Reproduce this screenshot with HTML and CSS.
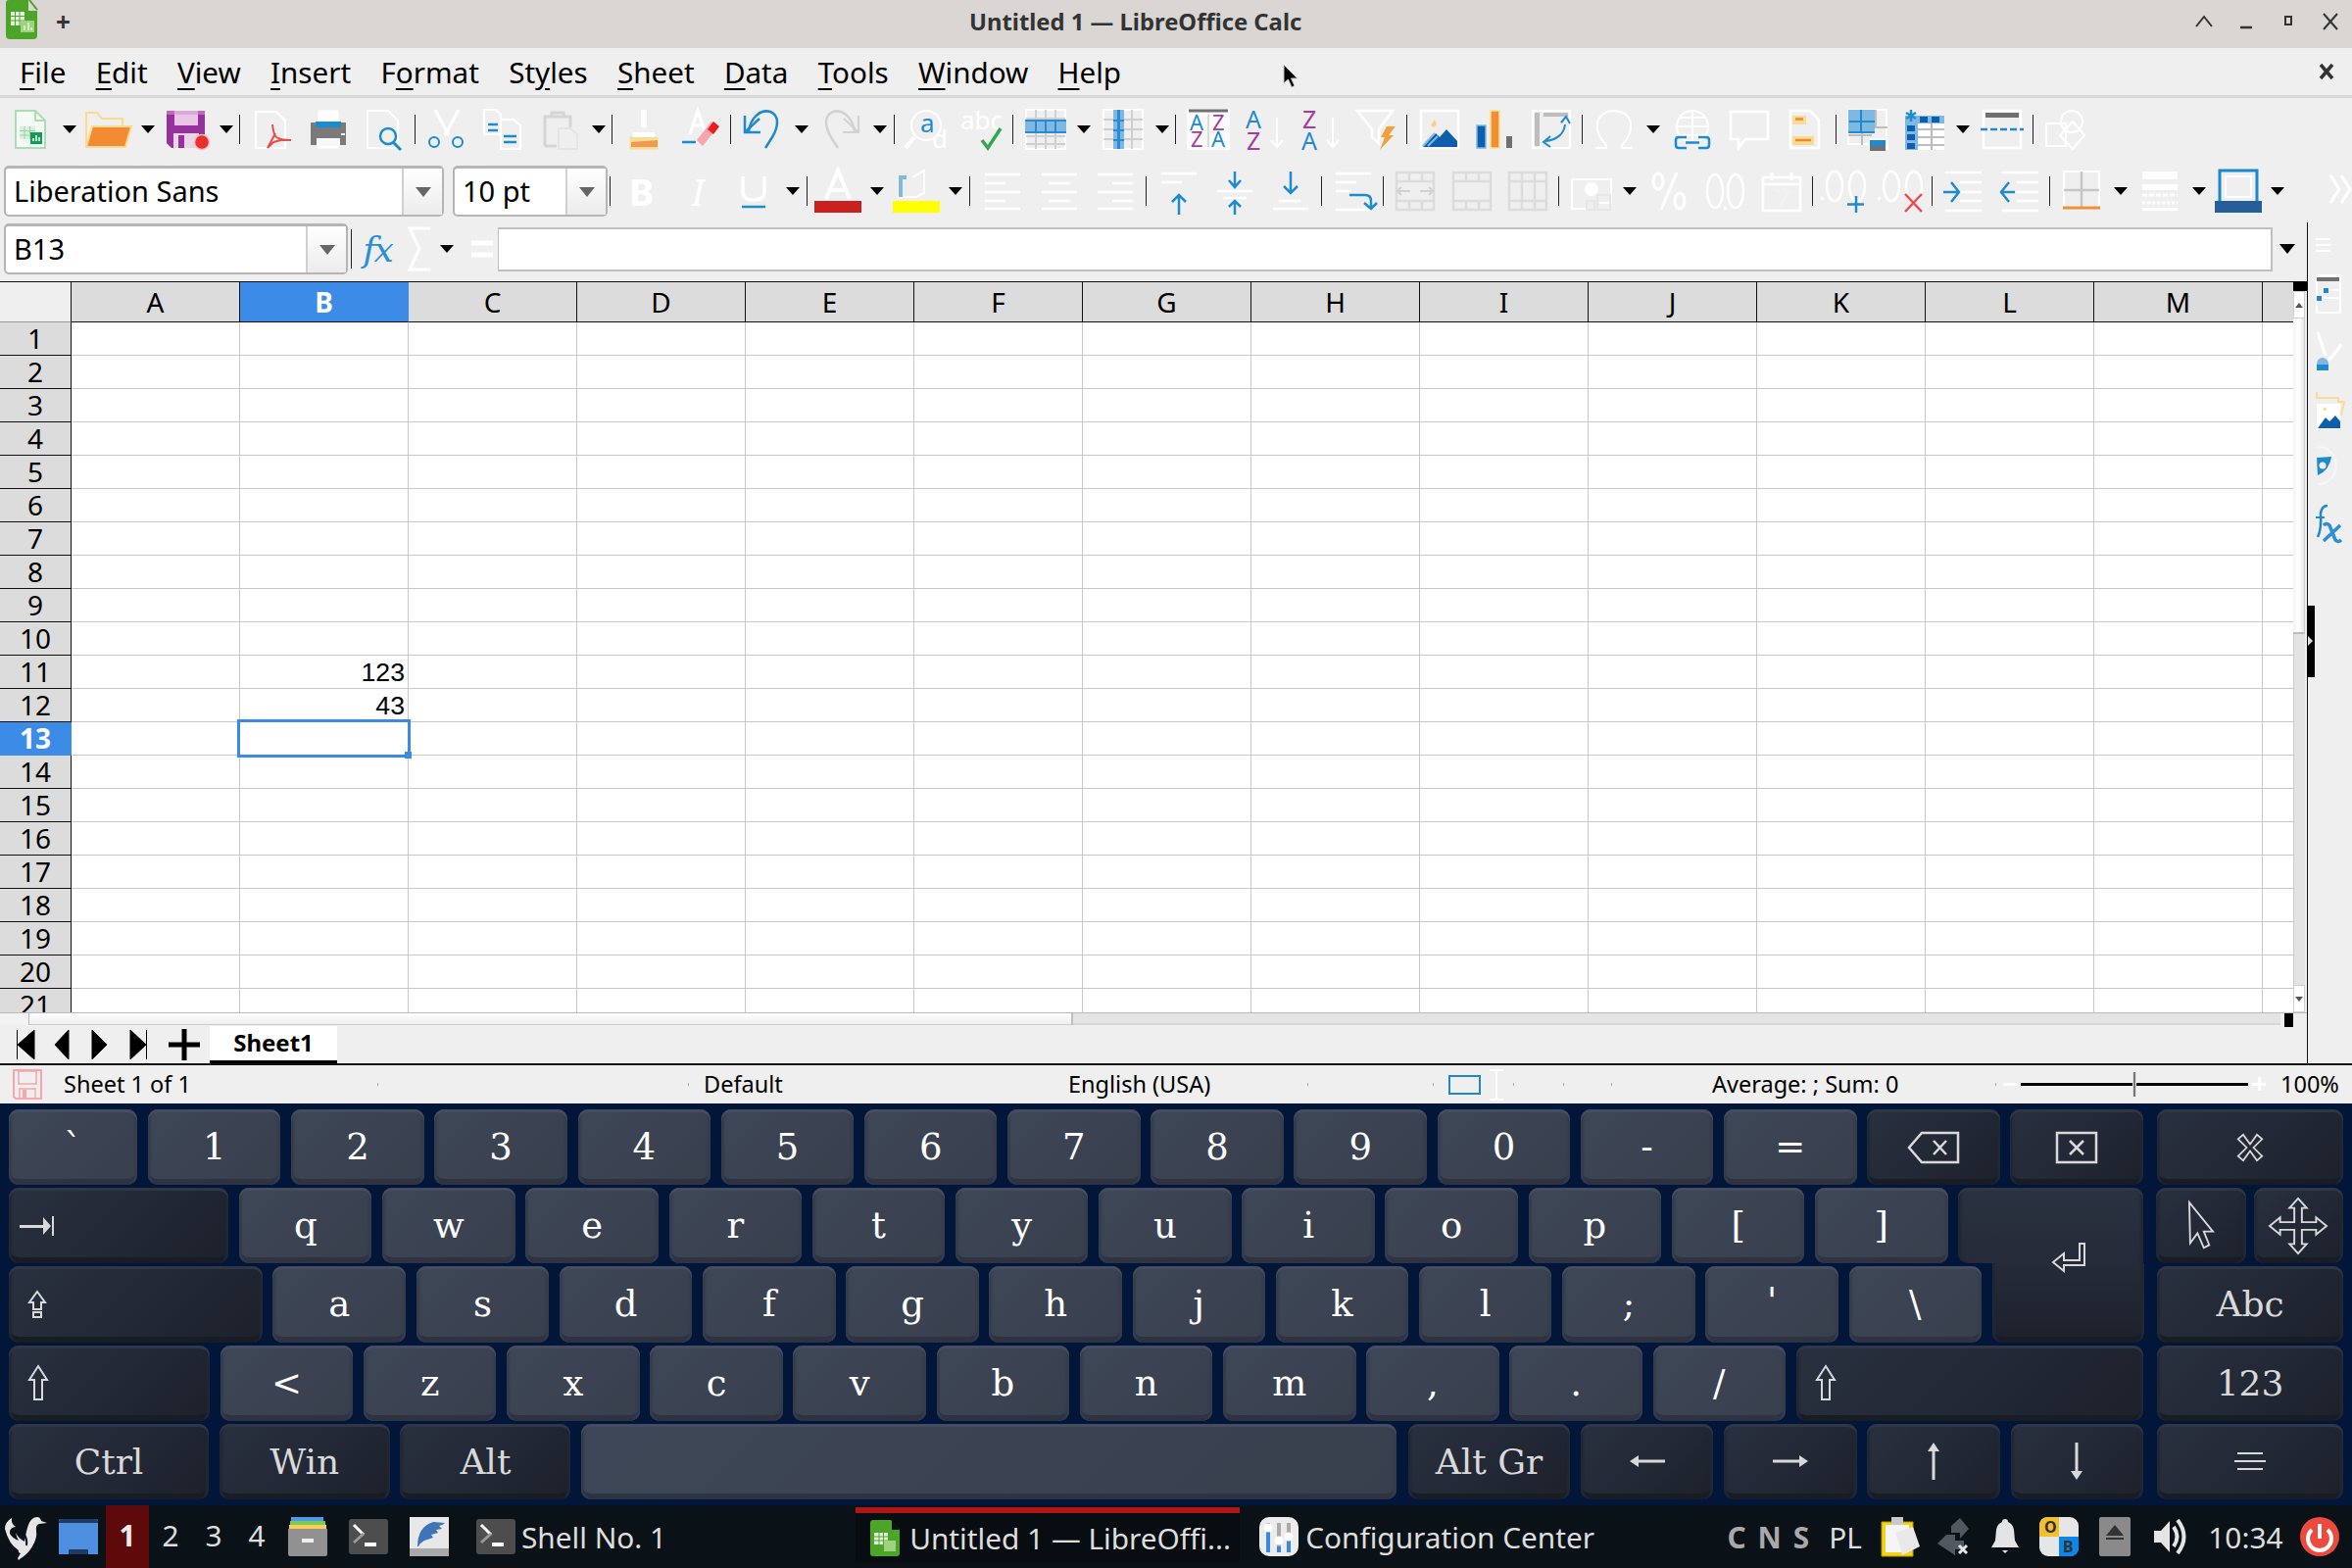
FILE: index.html
```html
<!DOCTYPE html>
<html lang="en">
<head>
    <meta charset="UTF-8">
    <title>Untitled 1 — LibreOffice Calc</title>
    <link rel="stylesheet" href="styles.css">
</head>
<body>

<header class="titlebar">
    <svg class="app-logo" viewBox="0 0 32 40"><path d="M3 0h20l9 11v25q0 4-4 4H4q-4 0-4-4V3q0-3 3-3z" fill="#4ca529"/><path d="M23 0l9 11h-9z" fill="#d9d6d3"/><path d="M24 0l8 10" stroke="#4ca529" stroke-width="2"/><path d="M5 12h14v14H5z" fill="#e6f3dd"/><path d="M5 16.500h14M5 21h14M9.500 12v14M14 12v14" stroke="#4ca529"/><path d="M15 21h14v12H15z" fill="#9fd27f"/><path d="M19 31v-5M23 31v-8M26 31v-3" stroke="#e6f3dd" stroke-width="1.500"/></svg>
    <span class="title-plus">+</span>
    <h1 class="title-text">Untitled 1 — LibreOffice Calc</h1>
    <div class="win-btns">
        <svg viewBox="0 0 18 18"><path d="M1 14l8-10 8 10" fill="none" stroke="#333" stroke-width="2"/></svg>
        <svg viewBox="0 0 18 18"><path d="M3 15h12" stroke="#333" stroke-width="2.500"/></svg>
        <svg viewBox="0 0 18 18"><rect x="6" y="4" width="6" height="8" fill="none" stroke="#333" stroke-width="2"/></svg>
        <svg viewBox="0 0 18 18"><path d="M2 1l14 16M16 1L2 17" stroke="#333" stroke-width="2"/></svg>
    </div>
</header>

<nav class="menubar">
    <span><u>F</u>ile</span>
    <span><u>E</u>dit</span>
    <span><u>V</u>iew</span>
    <span><u>I</u>nsert</span>
    <span>F<u>o</u>rmat</span>
    <span>St<u>y</u>les</span>
    <span><u>S</u>heet</span>
    <span><u>D</u>ata</span>
    <span><u>T</u>ools</span>
    <span><u>W</u>indow</span>
    <span><u>H</u>elp</span>
    <svg class="menu-close" viewBox="0 0 18 18"><path d="M3 2l12 14M15 2L3 16" stroke="#333" stroke-width="3.500"/></svg>
</nav>

<svg class="pointer" viewBox="0 0 16 26"><path d="M1 1v19l4.500-4 3.500 8 3-1.500-3.500-7.500H15z" fill="#000" stroke="#ccc"/></svg>

<div class="toolbar tb-std">
    <span class="tool"><svg class="ic" viewBox="0 0 40 40"><path d="M5 1h20l10 10v28H5z" fill="#f6faf6" stroke="#a8e0b4" stroke-width="2"/><path d="M25 1v10h10" fill="none" stroke="#a8e0b4" stroke-width="2"/><path d="M9 17h16v13H9z" fill="#dfeee2"/><path d="M9 21.500h16M9 26h16M14 17v13M19.500 17v13" stroke="#9ad3a8"/><path d="M20 23h12v12H20z" fill="#0f9d58"/><path d="M23 32v-3M26 32v-6M29 32v-4" stroke="#fff" stroke-width="1.500"/></svg></span><span class="arr"></span>
    <span class="tool"><svg class="ic" viewBox="0 0 40 40"><path d="M-3 38V3h11l5 6h21v8" fill="none" stroke="#fbdb91" stroke-width="2"/><path d="M3 17h40l-6 21H-3z" fill="#f18c33" stroke="#fbdb91" stroke-width="2"/></svg></span><span class="arr"></span>
    <span class="tool"><svg class="ic" viewBox="0 0 40 40"><path d="M-1 1h39v30l-6 8H4l-5-5z" fill="#97329c"/><path d="M7 1h24v15H7z" fill="#e9c5e8"/><path d="M-1 1h39v4H-1z" fill="#d58fd3" opacity=".6"/><path d="M6 24h26v15H6z" fill="#e8d6e8"/><path d="M11 26h6v13h-6z" fill="#97329c"/><circle cx="35" cy="33" r="7.500" fill="#e6312e" stroke="#f8b9b9" stroke-width="1.500"/></svg></span><span class="arr"></span>
    <span class="sep"></span>
    <span class="tool"><svg class="ic" viewBox="0 0 40 40"><path d="M4 2h21l9 9v28H4z" fill="none" stroke="#fff" stroke-width="2"/><path d="M21 15q1 10 4 13 5 3 15 3-9-1-18 2l-6 6 8-15" fill="none" stroke="#ea4b4b" stroke-width="2"/></svg></span>
    <span class="tool"><svg class="ic" viewBox="0 0 40 40"><path d="M10 1h20v18H10zM10 28h20v11H10z" fill="#fff" stroke="#fff"/><path d="M2 13h36v23H2z" fill="#7a7a7a"/><path d="M10 2h20v13H10z" fill="#fff"/><path d="M7 12h26v6H7z" fill="#1b8bd0"/><path d="M8 29h24v8H8z" fill="#f8f8f8"/><path d="M33 24h4v2h-4z" fill="#fff"/></svg></span>
    <span class="tool"><svg class="ic" viewBox="0 0 40 40"><path d="M3 1h21l10 10v28H3z" fill="none" stroke="#fff" stroke-width="2"/><circle cx="24" cy="27" r="8" fill="none" stroke="#1e8bcd" stroke-width="2.500"/><path d="M29 33l8 8" stroke="#1e8bcd" stroke-width="3"/></svg></span>
    <span class="sep"></span>
    <span class="tool"><svg class="ic" viewBox="0 0 40 40"><path d="M8 0l14 26M32 0L18 26" stroke="#fff" stroke-width="3"/><circle cx="7" cy="33" r="5" fill="none" stroke="#1e8bcd" stroke-width="2"/><circle cx="31" cy="33" r="5" fill="none" stroke="#1e8bcd" stroke-width="2"/></svg></span>
    <span class="tool"><svg class="ic" viewBox="0 0 40 40"><path d="M1 0h12l5 5v20H1zM18 10h13l7 6v24H18z" fill="none" stroke="#fff" stroke-width="2"/><path d="M5 15h10M5 21h10M21 27h13M21 33h13" stroke="#1e8bcd" stroke-width="2.500"/></svg></span>
    <span class="tool"><svg class="ic" viewBox="0 0 40 40"><path d="M5 37V7h26v11M12 7V3h12v4" fill="none" stroke="#d5d5d5" stroke-width="3"/><path d="M5 37h12" stroke="#d5d5d5" stroke-width="3"/><path d="M19 19h12l7 6v15H19z" fill="none" stroke="#e4e4e4" stroke-width="2"/></svg></span><span class="arr"></span>
    <span class="sep"></span>
    <span class="tool"><svg class="ic" viewBox="0 0 40 40"><path d="M17 0h6v18h-6z" fill="#fff"/><path d="M6 28h28v12H6z" fill="#fadb93" stroke="#fadb93"/><path d="M9 28h22v-5H9z" fill="#fff"/><path d="M7 33l27-2v7H7z" fill="#ee9a52"/></svg></span>
    <span class="tool"><svg class="ic" viewBox="0 0 40 40"><path d="M10 25L18 1l8 24M13 16h10" fill="none" stroke="#fff" stroke-width="3"/><path d="M2 33h14" stroke="#1e8bcd" stroke-width="2.500"/><path d="M17 31l15-19 7 5-16 20z" fill="#f7a4ad"/><path d="M28 20l6-8 6 5-6 8z" fill="#e81f1f"/></svg></span>
    <span class="sep"></span>
    <span class="tool"><svg class="ic" viewBox="0 0 40 40"><path d="M6 22C8 8 18-1 28 2c10 4 8 16 2 26l-7 11" fill="none" stroke="#1e8bcd" stroke-width="2.500"/><path d="M2 6v17h16" fill="none" stroke="#1e8bcd" stroke-width="2.500"/><path d="M2 23L17 9" stroke="#1e8bcd" stroke-width="2.500"/></svg></span><span class="arr"></span>
    <span class="tool"><svg class="ic" viewBox="0 0 40 40"><path d="M34 22C32 8 22-1 12 2 2 6 4 18 10 28l7 11" fill="none" stroke="#d2d2d2" stroke-width="2.500"/><path d="M38 6v17H22M38 23L23 9" fill="none" stroke="#d2d2d2" stroke-width="2"/></svg></span><span class="arr"></span>
    <span class="sep"></span>
    <span class="tool"><svg class="ic" viewBox="0 0 40 40"><circle cx="20" cy="16" r="15" fill="none" stroke="#fff" stroke-width="2"/><path d="M8 28L-1 39" stroke="#fff" stroke-width="4"/><text x="14" y="23" class="ic-txt" fill="#1e8bcd">a</text><text x="26" y="39" class="ic-txt" fill="#fff">d</text></svg></span>
    <span class="tool"><svg class="ic" viewBox="0 0 40 40"><text x="-2" y="20" class="ic-txt" fill="#fff">abc</text><path d="M20 31l6 8 13-20" fill="none" stroke="#2fa84f" stroke-width="3.500"/></svg></span>
    <span class="sep"></span>
    <span class="tool"><svg class="ic" viewBox="0 0 40 40"><path d="M1 0h40v40H1z" fill="none" stroke="#fff" stroke-width="2"/><path d="M11 0v40M21 0v40M31 0v40M1 27h40M1 35h40M1 9h40" stroke="#cfcfcf" stroke-width="2"/><path d="M0 10h42v14H0z" fill="#7fb9e2"/><path d="M0 10h42v2H0zM0 22h42v2H0zM10 10h2v14h-2zM20 10h2v14h-2zM30 10h2v14h-2z" fill="#2a8bd0"/></svg></span><span class="arr"></span>
    <span class="tool"><svg class="ic" viewBox="0 0 40 40"><path d="M0 0h40v40H0z" fill="none" stroke="#fff" stroke-width="2"/><path d="M0 10h40M0 20h40M0 30h40M29 0v40" stroke="#cfcfcf" stroke-width="2"/><path d="M10 0h11v40H10z" fill="#7fb9e2"/><path d="M14 0h3v40h-3zM10 10h11v2H10zM10 20h11v2H10zM10 30h11v2H10z" fill="#2a8bd0"/></svg></span><span class="arr"></span>
    <span class="sep"></span>
    <span class="tool"><svg class="ic" viewBox="0 0 40 40"><path d="M-2-1h44v42H-2z" fill="#fff" opacity=".7"/><path d="M0 1h40" stroke="#707070" stroke-width="3"/><path d="M20 5v33" stroke="#bdbdbd"/><text x="1" y="21" class="ic-az" fill="#1e8bcd">A</text><text x="2" y="38" class="ic-az" fill="#a33e9f">Z</text><text x="24" y="21" class="ic-az" fill="#a33e9f">Z</text><text x="23" y="38" class="ic-az" fill="#1e8bcd">A</text></svg></span>
    <span class="tool"><svg class="ic" viewBox="0 0 40 40"><text x="1" y="19" class="ic-az2" fill="#1e8bcd">A</text><text x="2" y="41" class="ic-az2" fill="#a33e9f">Z</text><path d="M33 8v30M27 31l6 7 6-7" fill="none" stroke="#fff" stroke-width="2"/></svg></span>
    <span class="tool"><svg class="ic" viewBox="0 0 40 40"><text x="2" y="19" class="ic-az2" fill="#a33e9f">Z</text><text x="1" y="41" class="ic-az2" fill="#1e8bcd">A</text><path d="M33 8v30M27 31l6 7 6-7" fill="none" stroke="#fff" stroke-width="2"/></svg></span>
    <span class="tool"><svg class="ic" viewBox="0 0 40 40"><path d="M0 1h36L22 20v14l-7-6v-8z" fill="none" stroke="#fff" stroke-width="2.500"/><path d="M30 17h9l-7 9h5l-14 15 5-13h-4z" fill="#f3a13b"/></svg></span>
    <span class="sep"></span>
    <span class="tool"><svg class="ic" viewBox="0 0 40 40"><path d="M1 1h38v38H1z" fill="none" stroke="#fff" stroke-width="2.500"/><path d="M3 38l13-14 4 4 7-8 11 12v6z" fill="#0d5fad"/><path d="M3 37l12-13M8 37l10-10" stroke="#7fb9e2" stroke-width="2"/><path d="M11 16l4-6 2 5-3 3z" fill="#f8cf86"/></svg></span>
    <span class="tool"><svg class="ic" viewBox="0 0 40 40"><path d="M1 16h9v23H1z" fill="#0d5fad" stroke="#7fb9e2" stroke-width="1.500"/><path d="M15 1h9v38h-9z" fill="#f18f33" stroke="#fbdb91" stroke-width="1.500"/><path d="M31 27h6v12h-6z" fill="#707070"/></svg></span>
    <span class="tool"><svg class="ic" viewBox="0 0 40 40"><path d="M1 1h38v38H1z" fill="none" stroke="#fff" stroke-width="2"/><path d="M3 3h5v34H3zM12 3h25v4H12z" fill="#bdbdbd"/><path d="M34 15c-1 10-9 16-20 17M30 13l5-6 4 7M19 27l-7 6 7 5" fill="none" stroke="#1e8bcd" stroke-width="2"/></svg></span>
    <span class="sep"></span>
    <span class="tool"><svg class="ic" viewBox="0 0 40 40"><path d="M1 39h11v-3C4 28 2 20 3 13 5 5 12 1 20 1s15 4 17 12c1 7-1 15-9 23v3h11" fill="none" stroke="#fff" stroke-width="2"/></svg></span><span class="arr"></span>
    <span class="tool"><svg class="ic" viewBox="0 0 40 40"><circle cx="20" cy="17" r="16" fill="none" stroke="#fff" stroke-width="2"/><path d="M4 17h32M20 1v32M8 8h24M8 26h24" stroke="#fff" stroke-width="2"/><path d="M14 28H6q-3 0-3 3v5q0 3 3 3h8M26 28h8q3 0 3 3v5q0 3-3 3h-8M13 33.500h14" fill="none" stroke="#1e8bcd" stroke-width="2.500"/></svg></span>
    <span class="tool"><svg class="ic" viewBox="0 0 40 40"><path d="M1 2h38v28H16l-7 9v-9H1z" fill="none" stroke="#fff" stroke-width="2.500"/></svg></span>
    <span class="tool"><svg class="ic" viewBox="0 0 40 40"><path d="M5 1h20l9 9v29H5z" fill="none" stroke="#fff" stroke-width="2.500"/><path d="M7 6h14v9H7zM7 27h22v9H7z" fill="#fadb93"/><path d="M10 9.500h8M10 31h16" stroke="#ee8a2e" stroke-width="2.500"/></svg></span>
    <span class="sep"></span>
    <span class="tool"><svg class="ic" viewBox="0 0 40 40"><path d="M0 0h39v36H26M0 0v35h22" fill="none" stroke="#fff" stroke-width="2"/><path d="M0 26h24M0 18h40M14 18v18M28 0v18" stroke="#bdbdbd" stroke-width="2"/><path d="M0 0h27v24H0z" fill="#7fb9e2"/><path d="M1 12h26M13 0v24M0 23h27" stroke="#1e8bcd" stroke-width="2"/><path d="M23 36v-7h16v7M21 29h20v12H21z" fill="#fff"/><path d="M22 31h16v6H22z" fill="#1e8bcd"/><path d="M22 37h16v5H22z" fill="#707070"/></svg></span>
    <span class="tool"><svg class="ic" viewBox="0 0 40 40"><path d="M1 6h40v8H1zM1 6h13v35H1z" fill="#7fb9e2"/><path d="M14 14h27v27H14z" fill="#fff"/><path d="M14 20h27M14 28h27M14 36h27M28 14v27" stroke="#bdbdbd" stroke-width="2"/><path d="M7 0v12M2 3l10 6M12 3L2 9" stroke="#1e8bcd" stroke-width="2.500"/><path d="M16 7h8v6h-8zM28 7h8v6h-8zM3 16h8v6H3zM3 25h8v6H3zM3 34h8v6H3z" fill="#0d5fad"/></svg></span><span class="arr"></span>
    <span class="tool"><svg class="ic" viewBox="0 0 40 40"><path d="M1 1h38v38H1z" fill="none" stroke="#fff" stroke-width="2.500"/><path d="M3 3h34v5H3z" fill="#707070"/><path d="M-2 20h44" stroke="#1e8bcd" stroke-width="2.500" stroke-dasharray="7 3"/></svg></span>
    <span class="sep"></span>
    <span class="tool"><svg class="ic" viewBox="0 0 40 40"><circle cx="27" cy="12" r="11" fill="none" stroke="#fff" stroke-width="2"/><path d="M1 14h20v23H1z" fill="none" stroke="#fff" stroke-width="2"/><path d="M28 12l12 14-12 14-13-14z" fill="none" stroke="#fff" stroke-width="2"/></svg></span>
</div>

<div class="toolbar tb-fmt">
    <div class="combo combo-font"><span class="combo-val">Liberation Sans</span><span class="combo-btn"></span></div>
    <div class="combo combo-size"><span class="combo-val">10 pt</span><span class="combo-btn"></span></div>
    <span class="sep"></span>
    <span class="tool"><span class="ghost-b">B</span></span>
    <span class="tool"><span class="ghost-i">I</span></span>
    <span class="tool"><svg class="ic" viewBox="0 0 40 40"><path d="M9 5v16q0 8 11 8t11-8V5" fill="none" stroke="#fff" stroke-width="3.500"/><path d="M8 36h24" stroke="#1e8bcd" stroke-width="2.500"/></svg></span><span class="arr"></span>
    <span class="sep"></span>
    <span class="tool"><svg class="ic ic-tall" viewBox="0 0 48 44"><path d="M12 30L24 1l12 29M16 21h16" fill="none" stroke="#fff" stroke-width="4"/><path d="M0 32h48v12H0z" fill="#c9211e"/></svg></span><span class="arr"></span>
    <span class="tool"><svg class="ic ic-tall" viewBox="0 0 48 44"><path d="M6 6v22h18l8-4V1L20 8" fill="none" stroke="#fff" stroke-width="2"/><path d="M6 6h8v4h-4v18H6z" fill="#7fb9e2"/><path d="M0 32h48v12H0z" fill="#ff0"/></svg></span><span class="arr"></span>
    <span class="sep s8"></span>
    <span class="tool"><svg class="ic" viewBox="0 0 40 40"><path d="M2 3h36M2 12h21M2 21h36M2 30h21M2 38h36" stroke="#fff" stroke-width="2.500"/></svg></span>
    <span class="tool"><svg class="ic" viewBox="0 0 40 40"><path d="M2 3h36M9 12h22M2 21h36M9 30h22M2 38h36" stroke="#fff" stroke-width="2.500"/></svg></span>
    <span class="tool"><svg class="ic" viewBox="0 0 40 40"><path d="M2 3h36M17 12h21M2 21h36M17 30h21M2 38h36" stroke="#fff" stroke-width="2.500"/></svg></span>
    <span class="sep s7"></span>
    <span class="tool"><svg class="ic" viewBox="0 0 40 40"><path d="M2 2h36M2 11h21" stroke="#fff" stroke-width="2.500"/><path d="M20 44V24M13 31l7-7 7 7" fill="none" stroke="#1e8bcd" stroke-width="2.500"/></svg></span>
    <span class="tool"><svg class="ic" viewBox="0 0 40 40"><path d="M2 20h36M8 27h24" stroke="#fff" stroke-width="2.500"/><path d="M20 0v16M14 9l6 7 6-7M20 44V30M14 36l6-6 6 6" fill="none" stroke="#1e8bcd" stroke-width="2.500"/></svg></span>
    <span class="tool"><svg class="ic" viewBox="0 0 40 40"><path d="M8 30h22M2 38h36" stroke="#fff" stroke-width="2.500"/><path d="M20 0v22M13 15l7 7 7-7" fill="none" stroke="#1e8bcd" stroke-width="2.500"/></svg></span>
    <span class="sep"></span>
    <span class="tool"><svg class="ic" viewBox="0 0 40 40"><path d="M2 2h36M2 11h21M2 20h16M2 39h36" stroke="#fff" stroke-width="2.500"/><path d="M16 24h16q6 0 6 6v7M31 32l7 6 6-6" fill="none" stroke="#1e8bcd" stroke-width="2.500"/></svg></span>
    <span class="sep"></span>
    <span class="tool"><svg class="ic" viewBox="0 0 40 40"><path d="M1 1h38v38H1zM1 10h38M1 30h38M14 1v9M27 1v9M14 30v9M27 30v9" fill="none" stroke="#dcdcdc" stroke-width="2.500"/><path d="M3 20h12M6 16l-4 4 4 4M25 20h12M34 16l4 4-4 4" fill="none" stroke="#d2d2d2" stroke-width="2"/></svg></span>
    <span class="tool"><svg class="ic" viewBox="0 0 40 40"><path d="M1 1h38v38H1zM1 10h38M1 30h38M14 1v9M27 1v9M14 30v9M27 30v9" fill="none" stroke="#dcdcdc" stroke-width="2.500"/></svg></span>
    <span class="tool"><svg class="ic" viewBox="0 0 40 40"><path d="M1 1h38v38H1zM1 10h38M1 30h38M14 1v38M27 1v38" fill="none" stroke="#dcdcdc" stroke-width="2.500"/></svg></span>
    <span class="sep s7"></span>
    <span class="tool"><svg class="ic" viewBox="0 0 40 40"><path d="M1 8h40v24h-12M1 8v30h14" fill="none" stroke="#fff" stroke-width="2"/><circle cx="21" cy="18" r="7" fill="#fff"/><path d="M16 30h8v9h-8zM27 24h13v15H27z" fill="none" stroke="#e6e6e6" stroke-width="2"/></svg></span><span class="arr"></span>
    <span class="tool"><svg class="ic" viewBox="0 0 40 40"><path d="M28 1L12 39" stroke="#fff" stroke-width="3"/><ellipse cx="9" cy="10" rx="5" ry="8" fill="none" stroke="#fff" stroke-width="3"/><ellipse cx="31" cy="30" rx="5" ry="8" fill="none" stroke="#fff" stroke-width="3"/></svg></span>
    <span class="tool"><svg class="ic" viewBox="0 0 40 40"><ellipse cx="9" cy="20" rx="8" ry="17" fill="none" stroke="#fff" stroke-width="2.500"/><ellipse cx="30" cy="20" rx="8" ry="17" fill="none" stroke="#fff" stroke-width="2.500"/><path d="M18 36h3v3h-3z" fill="#fff"/></svg></span>
    <span class="tool"><svg class="ic" viewBox="0 0 40 40"><path d="M1 6h38v34H1zM1 13h38" fill="none" stroke="#fff" stroke-width="2.500"/><path d="M10 1v8M30 1v8" stroke="#fff" stroke-width="3"/><path d="M12 20h15l-8 15" fill="none" stroke="#f2f2f2" stroke-width="2.500"/></svg></span>
    <span class="sep s7"></span>
    <span class="tool"><svg class="ic" viewBox="0 0 40 40"><path d="M-4 26h3v3h-3z" fill="#fff"/><ellipse cx="10" cy="15" rx="8" ry="15" fill="none" stroke="#fff" stroke-width="2.500"/><ellipse cx="33" cy="15" rx="8" ry="15" fill="none" stroke="#fff" stroke-width="2.500"/><path d="M32 25v17M23 33.500h17" stroke="#1e8bcd" stroke-width="2.500"/></svg></span>
    <span class="tool"><svg class="ic" viewBox="0 0 40 40"><path d="M-4 26h3v3h-3z" fill="#fff"/><ellipse cx="10" cy="15" rx="8" ry="15" fill="none" stroke="#fff" stroke-width="2.500"/><ellipse cx="33" cy="15" rx="8" ry="15" fill="none" stroke="#fff" stroke-width="2.500"/><path d="M24 23l17 18M41 23L24 41" stroke="#ea4b4b" stroke-width="2.500"/></svg></span>
    <span class="sep"></span>
    <span class="tool"><svg class="ic" viewBox="0 0 40 40"><path d="M2 1h37M17 11h22M17 30h22M2 40h37M17 21h22" stroke="#fff" stroke-width="2.500"/><path d="M0 21h15M8 11l8 10-8 10" fill="none" stroke="#1e8bcd" stroke-width="2.500"/></svg></span>
    <span class="tool"><svg class="ic" viewBox="0 0 40 40"><path d="M2 1h37M17 11h22M17 30h22M2 40h37M17 21h22" stroke="#fff" stroke-width="2.500"/><path d="M15 21H0M9 11L1 21l8 10" fill="none" stroke="#1e8bcd" stroke-width="2.500"/></svg></span>
    <span class="sep"></span>
    <span class="tool"><svg class="ic" viewBox="0 0 40 40"><path d="M2 0h36v36H2z" fill="none" stroke="#fff" stroke-width="2"/><path d="M20 0v36M2 19h36" stroke="#c6c6c6" stroke-width="2.500"/><path d="M1 37h38" stroke="#f18f33" stroke-width="3"/></svg></span><span class="arr"></span>
    <span class="tool"><svg class="ic" viewBox="0 0 40 40"><path d="M2 0h36v8H2zM2 13h36v6H2z" fill="#fff"/><path d="M2 24h36" stroke="#fff" stroke-width="3" stroke-dasharray="5 2"/><path d="M2 32h36" stroke="#fff" stroke-width="3" stroke-dasharray="3 2"/><path d="M2 37h36v3H2z" fill="#fff"/></svg></span><span class="arr"></span>
    <span class="tool"><svg class="ic ic-tall" viewBox="0 0 48 44"><path d="M5 1h38v33H5z" fill="none" stroke="#1e88cf" stroke-width="3"/><path d="M11 7h26v21H11z" fill="none" stroke="#fff" stroke-width="2"/><path d="M0 32h48v12H0z" fill="#255e99"/></svg></span><span class="arr"></span>
    <svg class="more" viewBox="0 0 24 30"><path d="M2 1l9 14-9 14M13 1l9 14-9 14" fill="none" stroke="#fff" stroke-width="3"/></svg>
</div>

<div class="workspace">
    <div class="doc">
        <div class="formula-bar">
            <div class="combo combo-name"><span class="combo-val">B13</span><span class="combo-btn"></span></div>
            <span class="sep sep-f"></span>
            <span class="fx">𝑓𝑥</span>
            <svg class="sigma" viewBox="0 0 24 46"><path d="M23 2H2l10 21L2 44h21" fill="none" stroke="#fff" stroke-width="3"/></svg>
            <span class="arr arr-f"></span>
            <svg class="equal" viewBox="0 0 24 20"><path d="M1 4h22M1 16h22" stroke="#fff" stroke-width="5"/></svg>
            <div class="formula-input"></div>
            <span class="arr arr-big"></span>
        </div>

        <div class="sheet">
            <div class="grid-area">
                <div class="col-heads">
                    <span class="corner"></span>
                    <span class="ch">A</span><span class="ch ch-on">B</span><span class="ch">C</span><span class="ch">D</span>
                    <span class="ch">E</span><span class="ch">F</span><span class="ch">G</span><span class="ch">H</span>
                    <span class="ch">I</span><span class="ch">J</span><span class="ch">K</span><span class="ch">L</span>
                    <span class="ch">M</span><span class="ch ch-end"></span>
                </div>
                <div class="grid-body">
                    <div class="row-heads">
                        <span>1</span><span>2</span><span>3</span><span>4</span><span>5</span><span>6</span><span>7</span>
                        <span>8</span><span>9</span><span>10</span><span>11</span><span>12</span><span class="rh-on">13</span><span>14</span>
                        <span>15</span><span>16</span><span>17</span><span>18</span><span>19</span><span>20</span><span>21</span>
                    </div>
                    <div class="cells">
                        <span class="val val-11">123</span>
                        <span class="val val-12">43</span>
                        <span class="cursor"><i></i></span>
                    </div>
                </div>
            </div>
            <div class="vscroll">
                <span class="vs-corner"></span>
                <span class="vs-btn"></span>
                <span class="vs-thumb"></span>
                <span class="vs-track"></span>
                <span class="vs-btn vs-down"></span>
            </div>
        </div>

        <div class="hscroll">
            <span class="hs-btn"></span>
            <span class="hs-thumb"></span>
            <span class="hs-track"></span>
            <span class="hs-end"></span>
        </div>

        <div class="tabbar">
            <svg class="tab-nav" viewBox="0 0 136 32"><path d="M.500 1v30M18 1v30L1 16zM53 1v30L39 16zM77 1v30l15-15zM116 1v30l16-15zM132.500 1v30" stroke="#000"/></svg>
            <svg class="tab-add" viewBox="0 0 32 32"><path d="M0 16h32M16 0v32" stroke="#000" stroke-width="5"/></svg>
            <span class="tab">Sheet1</span>
        </div>
    </div>

    <aside class="sidebar">
        <svg viewBox="0 0 28 14" class="sb-menu"><path d="M0 1h15M0 7h15M0 13h15" stroke="#fff" stroke-width="2"/></svg>
        <svg viewBox="0 0 28 40" class="sb-props"><path d="M1 1h24v38H1z" fill="none" stroke="#fff" stroke-width="2"/><path d="M1 3h23v4H1z" fill="#707070"/><path d="M8 14h5v5H8zM1 22h5v5H1z" fill="#1e8bcd"/><path d="M14 16h10M8 24h16" stroke="#fff" stroke-width="2"/></svg>
        <svg viewBox="0 0 28 40" class="sb-styles"><path d="M2 0l8 24M26 12q-8 14-16 18" fill="none" stroke="#fff" stroke-width="3"/><ellipse cx="7" cy="32" rx="6" ry="6" fill="#7fb9e2"/><path d="M1 33h12v6H1z" fill="#1e8bcd"/></svg>
        <svg viewBox="0 0 30 38" class="sb-gallery"><path d="M1 0v6h22v4h6l-3 14" fill="none" stroke="#fadb93" stroke-width="2"/><path d="M1 12h24v26H1z" fill="#fff"/><path d="M2 37l8-11 4 4 6-6 5 6v7z" fill="#0d5fad"/><path d="M7 18l3-3 1 4z" fill="#f8cf86"/></svg>
        <svg viewBox="0 0 28 40" class="sb-nav"><path d="M2 1a19 19 0 1 1 0 38" fill="none" stroke="#f7f7f7" stroke-width="2"/><path d="M1 12L16 11q-2 14-14 19z" fill="#1e8bcd"/><circle cx="7" cy="20" r="3.500" fill="#f0f0f0"/></svg>
        <svg viewBox="0 0 28 40" class="sb-fx"><path d="M2 34Q6 26 5 10q1-8 7-8" fill="none" stroke="#1e8bcd" stroke-width="2.500"/><path d="M0 14h9" stroke="#1e8bcd" stroke-width="2"/><path d="M8 22q3-3 6 0l6 15q3 3 6 0M25 22L8 38" fill="none" stroke="#2a8fd6" stroke-width="3.500"/></svg>
        <span class="sb-handle"></span>
    </aside>
</div>

<footer class="statusbar">
    <svg class="st-save" viewBox="0 0 30 31"><path d="M1 1h28v29H3l-2-2z" fill="none" stroke="#f7a6ad" stroke-width="2"/><path d="M6 2h18v13H6zM7 20h16v10H7z" fill="none" stroke="#f7a6ad" stroke-width="1.500"/><path d="M10 21h4v9h-4z" fill="#f7a6ad"/></svg>
    <span class="st st-sheet">Sheet 1 of 1</span>
    <span class="st st-blank1"></span>
    <span class="st st-default">Default</span>
    <span class="st st-lang">English (USA)</span>
    <span class="st st-ins"></span>
    <span class="st-mode"><i class="mode-box"></i></span>
    <svg class="st-beam" viewBox="0 0 16 32"><path d="M1 1h14M1 31h14M8 1v30" stroke="#fff" stroke-width="2"/></svg>
    <span class="st st-blank2"></span>
    <span class="st st-blank3"></span>
    <span class="st st-blank4"></span>
    <span class="st st-sum">Average: ; Sum: 0</span>
    <span class="zoom"><i></i></span>
    <span class="st-pct">100%</span>
</footer>

<section class="keyboard">
    <div class="kb-main">
        <div class="kb-row">
            <span class="key w-grave">`</span>
            <span class="key">1</span><span class="key">2</span><span class="key">3</span><span class="key">4</span><span class="key">5</span>
            <span class="key">6</span><span class="key">7</span><span class="key">8</span><span class="key">9</span><span class="key">0</span>
            <span class="key">-</span><span class="key">=</span>
            <span class="key fn"><svg width="52" height="32" viewBox="0 0 52 32"><path d="M14 1h37v30H14L1 16z M26 9l13 14M39 9L26 23" fill="none" stroke="#d9d9d9" stroke-width="2.500"/></svg></span>
            <span class="key fn"><svg width="42" height="32" viewBox="0 0 42 32"><path d="M1 1h40v30H1z M14 9l14 14M28 9L14 23" fill="none" stroke="#d9d9d9" stroke-width="2.500"/></svg></span>
        </div>
        <div class="kb-row">
            <span class="key fn w-tab align-l"><svg width="36" height="20" viewBox="0 0 36 20"><path d="M0 9h26v3H0zM33 0h2v20h-2zM24 1l8 9-8 9z" fill="#d9d9d9"/></svg></span>
            <span class="key">q</span><span class="key">w</span><span class="key">e</span><span class="key">r</span><span class="key">t</span><span class="key">y</span>
            <span class="key">u</span><span class="key">i</span><span class="key">o</span><span class="key">p</span><span class="key">[</span><span class="key">]</span>
            <span class="key fn enter-top"></span>
        </div>
        <div class="kb-row">
            <span class="key fn w-lock align-l"><svg width="20" height="28" viewBox="0 0 20 28"><path d="M10 1l8 11h-4v7H6v-7H2zM6 22h8v5H6z" fill="none" stroke="#d9d9d9" stroke-width="2"/></svg></span>
            <span class="key">a</span><span class="key">s</span><span class="key">d</span><span class="key">f</span><span class="key">g</span><span class="key">h</span>
            <span class="key">j</span><span class="key">k</span><span class="key">l</span><span class="key">;</span><span class="key glyph-up">'</span><span class="key">\</span>
            <span class="key fn enter-bottom"><svg class="enter-icon" viewBox="0 0 36 32"><path d="M34 1v22H13v6L2 20l11-9v7h16V1z" fill="none" stroke="#d9d9d9" stroke-width="2"/></svg></span>
        </div>
        <div class="kb-row">
            <span class="key fn w-shift align-l"><svg width="22" height="36" viewBox="0 0 22 36"><path d="M11 1l9 14h-5v20H7V15H2z" fill="none" stroke="#d9d9d9" stroke-width="2"/></svg></span>
            <span class="key">&lt;</span><span class="key">z</span><span class="key">x</span><span class="key">c</span><span class="key">v</span><span class="key">b</span>
            <span class="key">n</span><span class="key">m</span><span class="key">,</span><span class="key">.</span><span class="key">/</span>
            <span class="key fn w-rshift align-l"><svg width="22" height="36" viewBox="0 0 22 36"><path d="M11 1l9 14h-5v20H7V15H2z" fill="none" stroke="#d9d9d9" stroke-width="2"/></svg></span>
        </div>
        <div class="kb-row">
            <span class="key fn w-ctrl txt">Ctrl</span>
            <span class="key fn w-alt txt">Win</span>
            <span class="key fn w-alt txt">Alt</span>
            <span class="key w-space"></span>
            <span class="key fn w-altgr txt">Alt Gr</span>
            <span class="key fn"><svg width="36" height="20" viewBox="0 0 36 20"><path d="M36 8.500H9V4l-9 6 9 6v-4.500h27z" fill="#d9d9d9"/></svg></span>
            <span class="key fn"><svg width="36" height="20" viewBox="0 0 36 20"><path d="M0 8.500h27V4l9 6-9 6v-4.500H0z" fill="#d9d9d9"/></svg></span>
            <span class="key fn"><svg width="20" height="38" viewBox="0 0 20 38"><path d="M8.500 38V9H4l6-9 6 9h-4.500v29z" fill="#d9d9d9"/></svg></span>
            <span class="key fn"><svg width="20" height="38" viewBox="0 0 20 38"><path d="M8.500 0v29H4l6 9 6-9h-4.500V0z" fill="#d9d9d9"/></svg></span>
        </div>
    </div>
    <div class="kb-side">
        <span class="key fn w-side"><svg width="28" height="28" viewBox="0 0 30 32"><path d="M7 1l8 11 8-11 6 5-10 10 10 10-6 5-8-11-8 11-6-5 10-10L1 6z" fill="none" stroke="#d9d9d9" stroke-width="2"/></svg></span>
        <div class="kb-pair">
            <span class="key fn w-half"><svg width="30" height="50" viewBox="0 0 30 54"><path d="M2 1l1 45 8-11 7 16 6-3-6-15h10z" fill="none" stroke="#d9d9d9" stroke-width="2"/></svg></span>
            <span class="key fn w-half"><svg width="60" height="58" viewBox="0 0 62 60"><path d="M31 1l9 10h-5v15h15v-5l11 9-11 9v-5H35v15h5l-9 10-9-10h5V34H12v5L1 30l11-9v5h15V11h-5z" fill="none" stroke="#d9d9d9" stroke-width="2"/></svg></span>
        </div>
        <span class="key fn w-side txt">Abc</span>
        <span class="key fn w-side txt">123</span>
        <span class="key fn w-side"><svg width="32" height="20" viewBox="0 0 32 20"><path d="M3 2h26M0 10h32M3 18h26" stroke="#d9d9d9" stroke-width="2"/></svg></span>
    </div>
</section>

<footer class="taskbar">
    <svg class="tb-bird" viewBox="0 0 44 44"><path d="M1 14q0-7 7-11-1 6 4 9-7 1-6 7 3 5 9 7-2-3-3-8 3 6 9 9 2-12 4-17 3-8 9-8 3 0 4 4l6 2-8 1q-4 1-3 7 1 7-3 14-3 7-11 13-2 1-4 3l-1-2 3-5q-3-1-2-3-10-6-14-22z" fill="#e6e6e6"/><path d="M21 20q3 5 2 11" fill="none" stroke="#0a1218" stroke-width="2"/></svg>
    <svg class="tb-app tb-trash" viewBox="0 0 40 36"><path d="M2 0h36q2 0 2 2v34H0V2q0-2 2-2z" fill="#4f8fdf"/><path d="M0 4q0-4 3-4h34q3 0 3 4z" fill="#1e3a63"/><path d="M10 36v-4q0-1 2-1h16q2 0 2 1v4z" fill="#1e3a63"/></svg>
    <span class="pager pager-on">1</span><span class="pager">2</span><span class="pager">3</span><span class="pager">4</span>
    <svg class="tb-app tb-files" viewBox="0 0 40 40"><path d="M3 0h33v10H3z" fill="#4f9be3"/><path d="M2 4h36v10H2z" fill="#7cc85d"/><path d="M1 8h38v10H1z" fill="#fbce5a"/><path d="M0 12h40v26q0 2-2 2H2q-2 0-2-2z" fill="#919191"/><path d="M14 22h12v4H14z" fill="#eee"/></svg>
    <svg class="tb-app tb-term" viewBox="0 0 40 36"><rect width="40" height="36" rx="3" fill="#4d4d4d"/><path d="M5 6l10 10" stroke="#fff" stroke-width="3"/><path d="M5 24l10-9" stroke="#999" stroke-width="3"/><path d="M16 24h12v4H16z" fill="#fff"/></svg>
    <svg class="tb-app tb-quill" viewBox="0 0 40 40"><path d="M0 0h40v32H0z" fill="#e8e8e8"/><path d="M0 32h40v8H0z" fill="#a9a9a9"/><path d="M8 30Q8 10 24 5l12 1q-3 3-6 3l3 3-6 1 2 3-7 2 2 3-9 3q-4 2-6 6" fill="#3f74b8"/></svg>
    <svg class="tb-app tb-term2" viewBox="0 0 40 36"><rect width="40" height="36" rx="3" fill="#4d4d4d"/><path d="M5 6l10 10" stroke="#fff" stroke-width="3"/><path d="M5 24l10-9" stroke="#999" stroke-width="3"/><path d="M16 24h12v4H16z" fill="#fff"/></svg>
    <span class="task task-shell">Shell No. 1</span>
    <div class="task-on">
        <svg class="tb-calc" viewBox="0 0 30 37"><path d="M3 0h18l9 10v24q0 3-3 3H3q-3 0-3-3V3q0-3 3-3z" fill="#4ca529"/><path d="M22 0l8 10h-8z" fill="#0a1218"/><path d="M4 13h14v12H4z" fill="#e6f3dd"/><path d="M4 17h14M4 21h14M9 13v12M13.500 13v12" stroke="#4ca529"/><path d="M14 21h12v11H14z" fill="#9fd27f"/></svg>
        <span class="task">Untitled 1 — LibreOffi...</span>
    </div>
    <svg class="tb-app tb-conf" viewBox="0 0 40 40"><rect width="40" height="40" rx="10" fill="#ececec"/><path d="M9 6v30M20 6v30M30 6v30" stroke="#aaa" stroke-width="4"/><path d="M9 14v22M20 30v6M30 22v14" stroke="#3a87e0" stroke-width="4"/><circle cx="9" cy="11" r="4.500" fill="#fff"/><circle cx="20" cy="24" r="4.500" fill="#fff"/><circle cx="30" cy="20" r="4.500" fill="#fff"/></svg>
    <span class="task">Configuration Center</span>

    <div class="tray">
        <span class="lock">C</span><span class="lock">N</span><span class="lock">S</span>
        <span class="lang">PL</span>
        <svg class="tr-clip" viewBox="0 0 40 40"><path d="M1 5h32v35H1z" fill="#f3d217" stroke="#b59a0b"/><path d="M5 8h24v28H5z" fill="#f5f5f5"/><path d="M11 0h12v8H11z" fill="#c9c9c9"/><path d="M15 16l18-6 7 20-18 9q-2-12-7-23z" fill="#e9e9e9"/></svg>
        <svg class="tr-net" viewBox="0 0 32 38"><path d="M14 8l9-8 9 11-9 10v-6h-9zM18 17v6h9v9H18v6L0 26l9-9z" fill="#505860"/><path d="M22 28l8 8M30 28l-8 8" stroke="#e6e6e6" stroke-width="3"/></svg>
        <svg class="tr-bell" viewBox="0 0 28 36"><path d="M14 0q3 0 3 3 5 2 6 8l1 11 4 7H0l4-7 1-11q1-6 6-8 0-3 3-3z" fill="#e4e4e4"/><path d="M11 32h6l-3 3z" fill="#e4e4e4"/></svg>
        <svg class="tr-ob" viewBox="0 0 40 40"><rect width="40" height="40" rx="9" fill="#e6e6e6"/><path d="M0 20V9q0-9 9-9h11v20z" fill="#f2c02f"/><path d="M20 20h20v11q0 9-9 9H20z" fill="#0a87e8"/><text x="5" y="16" class="ob-txt" fill="#333">O</text><text x="24" y="36" class="ob-txt" fill="#333">B</text></svg>
        <svg class="tr-eject" viewBox="0 0 32 40"><rect width="32" height="40" rx="2" fill="#8a8a8a"/><path d="M16 8l9 11H7zM7 21h18v2H7z" fill="#333"/></svg>
        <svg class="tr-vol" viewBox="0 0 34 36"><path d="M0 12h7l9-10v32l-9-10H0z" fill="#e4e4e4"/><path d="M20 8q7 10 0 20M24 1q13 17 0 34" fill="none" stroke="#e4e4e4" stroke-width="4"/></svg>
        <span class="clock">10:34</span>
        <svg class="tr-power" viewBox="0 0 40 40"><circle cx="20" cy="20" r="20" fill="#ed4a3e"/><path d="M12 13a12 12 0 1 0 16 0" fill="none" stroke="#fff" stroke-width="4"/><path d="M20 7v15" stroke="#fff" stroke-width="4"/></svg>
    </div>
</footer>

</body>
</html>
```

FILE: styles.css
```css
* { box-sizing: border-box; }
body { margin: 0; width: 2400px; height: 1600px; overflow: hidden; position: relative; background: #efefef; font-family: "Noto Sans", sans-serif; color: #000; }
svg { display: block; overflow: visible; flex: none; }

/* window title */
.titlebar { height: 49px; background: #d9d6d3; display: flex; align-items: center; padding-bottom: 6px; position: relative; }
.app-logo { width: 32px; height: 40px; margin-left: 6px; align-self: flex-start; }
.title-plus { font-size: 26px; font-weight: 700; color: #333; margin-left: 19px; width: 14px; }
.title-text { margin: 0 0 0 918px; font-size: 23.800px; font-weight: 700; color: #333; white-space: nowrap; }
.win-btns { margin-left: auto; display: flex; gap: 25px; padding-right: 13px; }
.win-btns svg { width: 18px; height: 18px; }

/* menu */
.menubar { height: 51px; display: flex; align-items: center; border-bottom: 3px solid #d8d8d8; font-size: 29.600px; padding-left: 20px; gap: 30.300px; }
.menubar u { text-underline-offset: 5px; }
.menu-close { width: 18px; height: 18px; margin-left: auto; margin-right: 17px; }
.pointer { position: absolute; left: 1309px; top: 65px; width: 16px; height: 26px; }

/* toolbars */
.toolbar { display: flex; align-items: center; }
.tb-std { height: 68px; padding: 0 0 4px 2px; }
.tb-fmt { height: 57px; padding: 0 0 3px 4px; }
.tool { width: 57.400px; height: 40px; display: flex; justify-content: center; align-items: center; flex: none; }
.ic { width: 40px; height: 40px; }
.ic-tall { width: 48px; height: 44px; }
.ic-txt { font: 26px "Noto Sans", sans-serif; }
.ic-az { font: 22px "Noto Sans", sans-serif; }
.ic-az2 { font: 25px "Noto Sans", sans-serif; }
.arr { width: 22.600px; display: flex; justify-content: center; flex: none; }
.arr::after { content: ""; border: 7px solid transparent; border-top: 8px solid #000; border-bottom: 0; }
.sep { width: 6px; flex: none; height: 30px; position: relative; }
.sep::after { content: ""; position: absolute; left: 2px; top: 0; bottom: 0; width: 1px; background: #222; }
.tb-std .sep { width: 6.500px; }
.s7 { width: 7px; }
.s8 { width: 8px; }
.ghost-b { font-size: 38px; font-weight: 700; color: #fff; }
.ghost-i { font-size: 38px; font-weight: 400; font-style: italic; color: #fff; }
.more { position: absolute; left: 2376px; top: 178px; width: 24px; height: 30px; }

/* combo boxes */
.combo { height: 52px; background: #fff; border: 2px solid #b5b5b5; border-top-width: 3px; border-radius: 5px; display: flex; flex: none; font-size: 29px; }
.combo-font { width: 449px; margin-right: 9px; }
.combo-size { width: 158px; }
.combo-name { width: 351px; }
.combo-val { flex: 1; padding-left: 8px; line-height: 46px; }
.combo-btn { width: 41px; border-left: 2px solid #d0d0d0; background: linear-gradient(#fff, #ececec); display: flex; align-items: center; justify-content: center; }
.combo-btn::after { content: ""; border: 8px solid transparent; border-top: 10px solid #666; border-bottom: 0; }

/* formula bar */
.workspace { display: flex; height: 862px; border-bottom: 2px solid #111; }
.doc { width: 2354px; flex: none; }
.formula-bar { height: 62px; display: flex; align-items: center; padding: 0 0 4px 4px; position: relative; }
.sep-f { margin-left: 1px; height: 40px; width: 5px; }
.fx { font-family: "DejaVu Serif", serif; font-size: 36px; font-style: italic; color: #2a8fd6; width: 44px; text-align: center; margin-left: 2px; white-space: nowrap; letter-spacing: -2px; }
.sigma { width: 24px; height: 46px; margin-left: 9px; }
.arr-f { margin-left: 5px; }
.equal { width: 24px; height: 20px; margin-left: 12px; }
.formula-input { width: 1811px; height: 45px; margin-left: 4px; background: #fff; border: 2px solid #c0c0c0; border-left-width: 1px; flex: none; }
.arr-big { width: 30px; }
.arr-big::after { border-width: 8px; border-top-width: 10px; }

/* sheet */
.sheet { height: 746px; display: flex; }
.grid-area { width: 2340px; overflow: hidden; flex: none; }
.col-heads { display: flex; height: 42px; border-top: 1px solid #111; }
.corner { width: 73px; flex: none; border-right: 1px solid #111; background: #efefef; border-bottom: 1px solid #999; }
.ch { width: 172px; flex: none; background: #dcdcdc; border-right: 1px solid #111; border-bottom: 1px solid #111; font-size: 28px; line-height: 40px; text-align: center; }
.ch-on { background: #3c8ce7; color: #fff; font-weight: 700; border-color: #3c8ce7; border-bottom-color: #111; }
.ch-end { width: 32px; border-right: 0; }
.grid-body { display: flex; height: 704px; }
.row-heads { width: 73px; flex: none; }
.row-heads span { display: block; height: 34px; line-height: 33px; text-align: center; font-size: 28px; background: #dcdcdc; border-right: 1px solid #111; border-bottom: 1px solid #111; }
.row-heads .rh-on { background: #3c8ce7; color: #fff; font-weight: 700; border-color: #3c8ce7; }
.cells { flex: 1; display: grid; grid-template-columns: repeat(14, 172px); grid-auto-rows: 34px;
    background-color: #fff;
    background-image: linear-gradient(to right, transparent 171px, #c8c8c8 171px), linear-gradient(to bottom, transparent 33px, #c8c8c8 33px);
    background-size: 172px 34px; }
.val { grid-column: 2; text-align: right; padding-right: 4px; font-family: "Liberation Sans", sans-serif; font-size: 26.670px; line-height: 34px; }
.val-11 { grid-row: 11; }
.val-12 { grid-row: 12; }
.cursor { grid-column: 2; grid-row: 13; position: relative; margin: -3px -2px -2px -3px; border: 3px solid #3b8ae6; }
.cursor i { position: absolute; right: -4px; bottom: -4px; width: 7px; height: 7px; background: #3b8ae6; }

.vscroll { width: 14px; display: flex; flex-direction: column; flex: none; }
.vs-corner { height: 10px; background: #000; }
.vs-btn { height: 28px; width: 12px; background: #fff; border: 1px solid #d0d0d0; display: flex; justify-content: center; align-items: center; }
.vs-btn::after { content: ""; border: 4px solid transparent; border-bottom: 5px solid #555; border-top: 0; }
.vs-down::after { border-top: 5px solid #555; border-bottom: 0; }
.vs-thumb { height: 322px; width: 12px; background: linear-gradient(to right, #f4f4f4, #fff 50%, #e8e8e8); border-bottom: 2px solid #bbb; border-right: 1px solid #ccc; }
.vs-track { flex: 1; width: 12px; background: #e3e3e3; border-left: 1px solid #ccc; }

.hscroll { height: 13px; display: flex; border-top: 1px solid #bbb; }
.hs-btn { width: 30px; background: #f3f3f3; border-right: 1px solid #bbb; }
.hs-thumb { width: 1065px; background: linear-gradient(#fff, #efefef); border-right: 2px solid #c0c0c0; border-bottom: 1px solid #ccc; }
.hs-track { flex: 1; background: #e4e4e4; border-bottom: 2px solid #d8d8d8; }
.hs-end { width: 9px; background: #000; margin-right: 14px; margin-left: 4px; height: 14px; }

.tabbar { height: 39px; display: flex; align-items: center; }
.tab-nav { width: 136px; height: 32px; margin-left: 17px; }
.tab-nav path { fill: #000; }
.tab-add { width: 32px; height: 32px; margin-left: 19px; }
.tab { width: 130px; height: 38px; margin: 1px 0 0 10px; background: #fff; border-bottom: 3px solid #000; font-size: 24px; font-weight: 700; text-align: center; line-height: 33px; }

/* sidebar */
.sidebar { flex: 1; border-left: 1px solid #111; position: relative; padding: 16px 0 0 8px; display: flex; flex-direction: column; margin-top: 2px; }
.sidebar svg { width: 28px; height: 40px; }
.sb-menu { height: 14px !important; margin-bottom: 23px; }
.sb-props { margin-bottom: 19px; }
.sb-styles { margin-bottom: 21px; }
.sb-gallery { height: 38px !important; width: 30px !important; margin-bottom: 17px; }
.sb-nav { margin-bottom: 19px; }
.sb-handle { position: absolute; left: -1px; top: 391px; width: 8px; height: 73px; background: #000; }
.sb-handle::after { content: ""; position: absolute; left: 1px; top: 31px; border: 5px solid transparent; border-left: 5px solid #ddd; border-right: 0; }

/* status */
.statusbar { height: 39px; display: flex; align-items: center; font-size: 23.500px; position: relative; }
.st { height: 100%; line-height: 39px; flex: none; position: relative; white-space: nowrap; }
.st::after { content: ""; position: absolute; right: 0; top: 18px; width: 1px; height: 3px; background: #aaa; }
.st-save { width: 30px; height: 31px; margin-left: 13px; }
.st-sheet { width: 343px; padding-left: 22px; }
.st-blank1 { width: 317px; }
.st-default { width: 382px; padding-left: 15px; }
.st-default::after { display: none; }
.st-lang { width: 250px; padding-left: 5px; }
.st-ins { width: 128px; }
.st-mode { width: 52px; padding-left: 15px; flex: none; }
.mode-box { display: block; width: 33px; height: 20px; border: 2px solid #1e88cf; }
.st-beam { width: 16px; height: 32px; margin-left: 4px; }
.st-blank2 { width: 10px; }
.st-blank3 { width: 51px; }
.st-blank4 { width: 49px; }
.st-sum { width: 392px; padding-left: 102px; }
.zoom { width: 232px; height: 3px; background: #000; position: relative; margin-left: 25px; flex: none; }
.zoom::before { content: ""; position: absolute; left: -18px; top: 0; width: 14px; height: 3px; background: #fff; }
.zoom::after { content: ""; position: absolute; right: -18px; top: -6px; width: 14px; height: 14px; background: linear-gradient(#fff, #fff) center / 14px 3px no-repeat, linear-gradient(#fff, #fff) center / 3px 14px no-repeat; }
.zoom i { position: absolute; left: 114px; top: -11px; width: 4px; height: 25px; background: #777; border-left: 1px solid #ddd; border-right: 1px solid #ddd; }
.st-pct { margin-left: 33px; white-space: nowrap; line-height: 39px; height: 100%; }

/* on screen keyboard */
.keyboard { height: 410px; background: #02163a; display: flex; padding: 6px 9px 0; }
.kb-main { width: 2178px; flex: none; display: flex; flex-direction: column; gap: 3px; }
.kb-row { display: flex; gap: 10.700px; align-items: flex-start; }
.kb-side { width: 191px; margin-left: 14px; display: flex; flex-direction: column; gap: 3px; }
.kb-pair { display: flex; gap: 8px; margin-left: -1px; }
.key { width: 135.500px; height: 77.200px; flex: none; border-radius: 10px; display: flex; align-items: center; justify-content: center; color: #fff;
    font-family: "DejaVu Serif", serif; font-size: 37px;
    background: linear-gradient(135deg, #3e4757, #383f4d);
    box-shadow: inset 0 3px 0 #454e60, inset 5px 0 2px -2px #353c4b, inset -5px 0 2px -2px #353c4b, inset 0 -6px 0 #2d3341; }
.fn { color: #d9d9d9; background: linear-gradient(135deg, #29303f, #1c212b);
    box-shadow: inset 0 3px 0 #2f3646, inset 5px 0 2px -2px #212734, inset -5px 0 2px -2px #212734, inset 0 -6px 0 #181c25; }
.txt { font-size: 36px; }
.glyph-up { padding: 0 0 6px; }
.align-l { justify-content: flex-start; padding-left: 19px; }
.w-grave { width: 131px; margin-right: .300px; }
.w-tab { width: 224.300px; padding-left: 11px; }
.w-lock { width: 258.800px; }
.w-shift { width: 205px; }
.w-rshift { width: 354.500px; }
.w-ctrl { width: 204px; }
.w-alt { width: 174px; }
.w-space { width: 832px; }
.w-altgr { width: 165.500px; margin-left: 1px; }
.w-side { width: 190px; }
.w-half { width: 91.500px; }
.enter-top { width: 189px; border-bottom-right-radius: 0; background: linear-gradient(#2a3140, #252b38); box-shadow: inset 0 3px 0 #2f3646, inset 5px 0 2px -2px #212734, inset -5px 0 2px -2px #212734; }
.enter-bottom { width: 155px; height: 80.400px; margin-top: -3.200px; border-top-left-radius: 0; border-top-right-radius: 0; position: relative; background: linear-gradient(#252b38, #1c212b); box-shadow: inset 5px 0 2px -2px #212734, inset -5px 0 2px -2px #212734, inset 0 -6px 0 #181c25; }
.enter-icon { position: absolute; left: 60px; top: -21px; width: 36px; height: 32px; }

/* panel at the bottom */
.taskbar { height: 64px; background: #0a1218; display: flex; align-items: center; color: #dedede; font-size: 29.800px; position: relative; }
.tb-bird { width: 44px; height: 44px; margin-left: 4px; }
.tb-trash { width: 40px; height: 36px; margin-left: 12px; }
.pager { width: 44px; height: 64px; line-height: 62px; text-align: center; flex: none; }
.pager-on { background: #5e0a0a; color: #eee; font-weight: 700; margin-left: 8px; }
.tb-files { width: 40px; height: 40px; margin-left: 10px; }
.tb-term { width: 40px; height: 36px; margin-left: 22px; }
.tb-quill { width: 40px; height: 40px; margin-left: 22px; }
.tb-term2 { width: 40px; height: 36px; margin-left: 28px; }
.task { white-space: nowrap; margin-left: 6px; }
.task-on { width: 392px; height: 56px; margin: -4px 0 0 193px; flex: none; background: #070d11; border-top: 6px solid #b01616; display: flex; align-items: center; padding-left: 15px; }
.task-on .task { margin-left: 10px; }
.tb-calc { width: 30px; height: 37px; }
.tb-conf { width: 40px; height: 40px; margin-left: 20px; }
.tb-conf + .task { margin-left: 7px; }
.tray { position: absolute; right: 13px; top: 0; height: 64px; display: flex; align-items: center; }
.lock { font-weight: 700; color: #a9a9a9; margin-right: 12px; }
.lang { margin: 0 19px 0 8px; }
.tr-clip { width: 40px; height: 40px; margin-right: 18px; }
.tr-net { width: 32px; height: 38px; margin-right: 23px; }
.tr-bell { width: 28px; height: 36px; margin-right: 21px; }
.tr-ob { width: 40px; height: 40px; margin-right: 21px; }
.ob-txt { font: 700 16px "Noto Sans", sans-serif; }
.tr-eject { width: 32px; height: 40px; margin-right: 24px; }
.tr-vol { width: 34px; height: 36px; margin-right: 21.500px; }
.clock { margin-right: 17.500px; }
.tr-power { width: 40px; height: 40px; }
```
